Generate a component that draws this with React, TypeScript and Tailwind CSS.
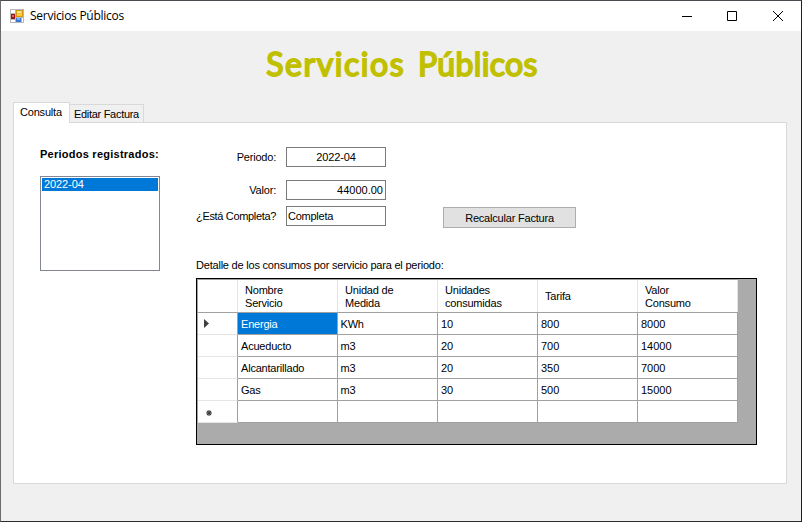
import React from 'react';

const columns = [
  ['Nombre', 'Servicio'],
  ['Unidad de', 'Medida'],
  ['Unidades', 'consumidas'],
  ['Tarifa'],
  ['Valor', 'Consumo'],
];

const rows = [
  ['Energia', 'KWh', '10', '800', '8000'],
  ['Acueducto', 'm3', '20', '700', '14000'],
  ['Alcantarillado', 'm3', '20', '350', '7000'],
  ['Gas', 'm3', '30', '500', '15000'],
  ['', '', '', '', ''],
];

function AppIcon() {
  return (
    <svg width="14" height="14" viewBox="0 0 14 14" shapeRendering="crispEdges">
      <rect width="14" height="14" fill="#b9b9b9" />
      <rect x="1" y="1" width="4" height="3" fill="#fff" />
      <rect x="1" y="11" width="4" height="2" fill="#fff" />
      <rect x="12" y="9" width="1" height="4" fill="#fff" />
      <rect x="6" y="1" width="7" height="7" fill="#d29a12" />
      <rect x="7" y="2" width="5" height="5" fill="#fbc93d" />
      <rect x="7" y="2" width="4" height="2" fill="#ffe48c" />
      <rect x="1" y="5" width="4" height="5" fill="#9c1414" />
      <rect x="2" y="6" width="2" height="2" fill="#e06a5c" />
      <rect x="6" y="9" width="5" height="4" fill="#3a76d6" />
      <rect x="7" y="9" width="3" height="2" fill="#7fb0f4" />
    </svg>
  );
}

function Field({ label, value, align, labelClass }: { label: string; value: string; align: string; labelClass: string }) {
  return (
    <div className="flex h-5 items-center">
      <span className={`w-[80px] text-right ${labelClass}`}>{label}</span>
      <div className={`ml-[10px] h-5 w-[100px] border border-[#7a7a7a] bg-white leading-[18px] ${align}`}>{value}</div>
    </div>
  );
}

function Grid() {
  return (
    <div className="h-[167px] w-[561px] border border-black bg-[#ababab]">
      <div className="w-[541px] border-l border-t border-[#a0a0a0]">
        <div className="flex h-[33px] border-b border-[#a0a0a0] bg-white">
          <div className="w-10 border-r border-[#e5e5e5]" />
          {columns.map((c) => (
            <div key={c[0]} className="flex w-[100px] flex-col justify-center border-r border-[#e5e5e5] pl-[7px] pt-px leading-[13px]">
              {c.map((l) => (
                <span key={l}>{l}</span>
              ))}
            </div>
          ))}
        </div>
        {rows.map((r, i) => (
          <div key={i} className="flex h-[22px] bg-white">
            <div className="flex w-10 items-center border-b border-r border-b-[#e5e5e5] border-r-[#a0a0a0] pl-[6px]">
              {i === 0 && (
                <svg width="5" height="9" viewBox="0 0 5 9">
                  <path d="M0 0L5 4.5L0 9Z" fill="#404040" />
                </svg>
              )}
              {i === 4 && (
                <svg className="ml-[2px] mt-[3px]" width="6" height="6" viewBox="0 0 6 6">
                  <path d="M3 0V6M0 3H6M1 1L5 5M5 1L1 5" stroke="#404040" strokeWidth="1.1" />
                </svg>
              )}
            </div>
            {r.map((v, j) => (
              <div
                key={j}
                className={`w-[100px] border-b border-r border-[#a0a0a0] leading-[22px] ${j === 1 ? 'pl-[2.5px]' : 'pl-[3px]'} ${j > 1 ? 'tracking-normal' : ''} ${i === 0 && j === 0 ? 'bg-[#0078d7] text-white' : ''}`}
              >
                {v}
              </div>
            ))}
          </div>
        ))}
      </div>
    </div>
  );
}

export default function App() {
  return (
    <div className="flex h-[522px] w-[802px] flex-col overflow-hidden whitespace-nowrap border border-b-[#2b2b2b] border-l-[#6b6b6f] border-r-[#1f1f1f] border-t-[#4a4b50] bg-[#f0f0f0] font-['Liberation_Sans',Arial,sans-serif] text-[11px] tracking-[-0.2px] text-black">
      <header className="flex h-[30px] shrink-0 items-center bg-white pl-[9px] font-['Open_Sans',sans-serif] text-[12px] tracking-[-0.27px]">
        <AppIcon />
        <span className="ml-[6px]">Servicios Públicos</span>
        <svg className="ml-auto mr-[17px]" width="102" height="12" viewBox="0 0 102 12" fill="none" stroke="#000">
          <path d="M0 6.5H10M45.5 1.5H54.5V10.5H45.5ZM91 1L101 11M101 1L91 11" />
        </svg>
      </header>
      <h1 className="flex h-[71px] shrink-0 justify-center pl-[2px] pt-[9px] font-['Lato',sans-serif] text-[32px] font-normal leading-[48px] tracking-[1.55px] text-[#c0c000] [-webkit-text-stroke:1.8px_#c0c000]">
        <span className="whitespace-pre">Servicios <span className="ml-[3px] tracking-[0.35px]">Públicos</span></span>
      </h1>
      <nav className="flex h-5 shrink-0 items-end pl-3">
        <div className="z-10 -mb-px h-[21px] w-[57px] border border-b-0 border-[#d9d9d9] bg-white pl-[6px] leading-[18px]">Consulta</div>
        <div className="h-[18px] w-[74px] border border-b-0 border-l-0 border-[#d9d9d9] bg-[#f0f0f0] pl-1 leading-[18px] tracking-[-0.3px]">Editar Factura</div>
      </nav>
      <main className="ml-3 flex h-[362px] w-[774px] shrink-0 border border-[#d9d9d9] bg-white">
        <section className="ml-[26px] w-[120px] pt-[24px]">
          <div className="h-[29px] font-bold leading-[14px] tracking-[0.25px]">Periodos registrados:</div>
          <div className="h-[95px] border border-[#828790] p-px">
            <div className="h-[13px] bg-[#0078d7] pl-[2px] leading-[13px] tracking-[-0.1px] text-white">2022-04</div>
          </div>
        </section>
        <section className="ml-9 flex w-[561px] flex-col pt-[24px]">
          <div className="flex">
            <div>
              <Field label="Periodo:" value="2022-04" align="px-[2px] text-center tracking-[-0.1px]" labelClass="" />
              <div className="h-[13px]" />
              <Field label="Valor:" value="44000.00" align="px-[2px] text-right tracking-normal" labelClass="" />
              <div className="h-[6px]" />
              <Field label="¿Está Completa?" value="Completa" align="pl-px text-left tracking-[-0.25px]" labelClass="tracking-[-0.33px]" />
            </div>
            <button className="ml-[57px] mt-[60px] h-[21px] w-[133px] border border-[#adadad] bg-[#e1e1e1] pt-px leading-[18px]">Recalcular Factura</button>
          </div>
          <div className="mb-[6px] mt-[30px] h-[14px] leading-[14px] tracking-[-0.21px]">Detalle de los consumos por servicio para el periodo:</div>
          <Grid />
        </section>
      </main>
    </div>
  );
}
